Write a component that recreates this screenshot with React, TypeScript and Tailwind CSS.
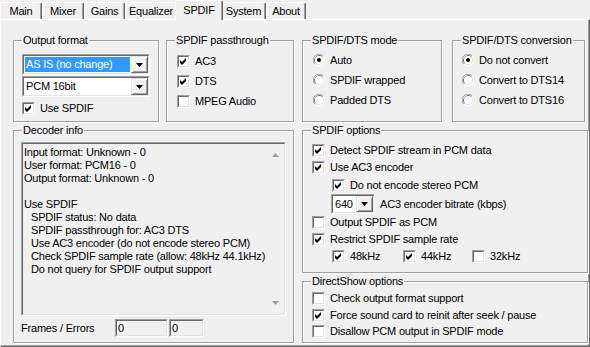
import clsx from 'clsx';
import type { ReactNode } from 'react';

const Check = ({ checked }: { checked?: boolean }) => (
  <span className="inline-block h-[13px] w-[13px] shrink-0 border border-t-[#a0a0a0] border-l-[#a0a0a0] border-b-white border-r-white">
    <span className="flex h-full w-full items-center justify-center border border-t-[#696969] border-l-[#696969] border-b-[#e3e3e3] border-r-[#e3e3e3] bg-white">
      {checked ? (
        <svg width="9" height="9" viewBox="0 0 9 9" className="block">
          <path d="M1 3 L3 5 L7 1 L7 4 L3 8 L1 6 Z" fill="#000" />
        </svg>
      ) : null}
    </span>
  </span>
);

const Radio = ({ checked }: { checked?: boolean }) => (
  <svg width="12" height="12" viewBox="0 0 12 12" className="block shrink-0">
    <path d="M10.24 1.76 A6 6 0 0 0 1.76 10.24" fill="none" stroke="#a0a0a0" strokeWidth="1" />
    <path d="M1.76 10.24 A6 6 0 0 0 10.24 1.76" fill="none" stroke="#fff" strokeWidth="1" />
    <path d="M9.5 2.5 A5 5 0 0 0 2.5 9.5" fill="none" stroke="#696969" strokeWidth="1" />
    <path d="M2.5 9.5 A5 5 0 0 0 9.5 2.5" fill="none" stroke="#e3e3e3" strokeWidth="1" />
    <circle cx="6" cy="6" r="4" fill="#fff" />
    {checked ? <circle cx="6" cy="6" r="2" fill="#000" /> : null}
  </svg>
);

const CheckRow = ({ checked, label, className }: { checked?: boolean; label: string; className?: string }) => (
  <div className={clsx('flex items-center gap-[5px]', className)}>
    <Check checked={checked} />
    <span className="whitespace-nowrap">{label}</span>
  </div>
);

const RadioRow = ({ checked, label }: { checked?: boolean; label: string }) => (
  <div className="flex h-[20px] items-center gap-[5px]">
    <Radio checked={checked} />
    <span className="whitespace-nowrap">{label}</span>
  </div>
);

const Sunken = ({ className, children }: { className?: string; children?: ReactNode }) => (
  <div className={clsx('border border-t-[#a0a0a0] border-l-[#a0a0a0] border-b-white border-r-white', className)}>
    <div className="h-full w-full border border-t-[#696969] border-l-[#696969] border-b-[#e3e3e3] border-r-[#e3e3e3]">
      {children}
    </div>
  </div>
);

const DropButton = () => (
  <div className="flex h-full w-[17px] shrink-0 items-center justify-center border border-t-[#e3e3e3] border-l-[#e3e3e3] border-b-[#696969] border-r-[#696969] bg-[#f0f0f0] shadow-[inset_1px_1px_0_#fff,inset_-1px_-1px_0_#a0a0a0]">
    <svg width="7" height="4" viewBox="0 0 7 4" className="block">
      <path d="M0 0 H7 L3.5 4 Z" fill="#000" />
    </svg>
  </div>
);

const Combo = ({ value, selected, className }: { value: string; selected?: boolean; className?: string }) => (
  <Sunken className={className}>
    <div className="flex h-full bg-white">
      <div className="flex flex-1 items-center p-[1px]">
        <div className={clsx('flex h-full w-full items-center pl-[1px]', selected ? 'bg-[#3399ff] text-white' : '')}>{value}</div>
      </div>
      <DropButton />
    </div>
  </Sunken>
);

const Group = ({ title, className, children }: { title: string; className?: string; children?: ReactNode }) => (
  <div className={clsx('relative border border-[#a0a0a0] shadow-[inset_1px_1px_0_#fff,1px_1px_0_#fff]', className)}>
    <span className="absolute -top-[7px] left-[8px] bg-[#f0f0f0] px-[1px] leading-[13px] whitespace-nowrap">{title}</span>
    {children}
  </div>
);

const tabs = [
  { label: 'Main', w: 'w-[42px]' },
  { label: 'Mixer', w: 'w-[42px]' },
  { label: 'Gains', w: 'w-[41px]' },
  { label: 'Equalizer', w: 'w-[52px]' },
  { label: 'SPDIF', w: 'w-[48px]', selected: true },
  { label: 'System', w: 'w-[45px]' },
  { label: 'About', w: 'w-[40px]' },
];

const decoderLines = [
  { text: 'Input format: Unknown - 0' },
  { text: 'User format: PCM16 - 0' },
  { text: 'Output format: Unknown - 0' },
  { text: '' },
  { text: 'Use SPDIF' },
  { text: 'SPDIF status: No data', indent: true },
  { text: 'SPDIF passthrough for: AC3 DTS', indent: true },
  { text: 'Use AC3 encoder (do not encode stereo PCM)', indent: true },
  { text: 'Check SPDIF sample rate (allow: 48kHz 44.1kHz)', indent: true },
  { text: 'Do not query for SPDIF output support', indent: true },
];

export default function App() {
  return (
    <div className="h-[347px] w-[590px] overflow-hidden bg-[#f0f0f0] font-['Liberation_Sans',Arial,sans-serif] text-[11px] leading-[13px] tracking-[-0.2px] text-black">
      <div className="flex h-[19px] items-end">
        {tabs.map((t) =>
          t.selected ? (
            <div
              key={t.label}
              className={clsx(
                'relative z-10 -mx-[2px] -mb-px flex h-[20px] items-start justify-center rounded-t-[2px] border-l border-t border-r border-l-white border-t-white border-r-[#696969] bg-[#f0f0f0] pt-[3px] shadow-[inset_-1px_0_0_#a0a0a0]',
                t.w,
              )}
            >
              {t.label}
            </div>
          ) : (
            <div
              key={t.label}
              className={clsx(
                'flex h-[17px] items-start justify-center rounded-t-[2px] border-l border-t border-r border-l-white border-t-white border-r-[#696969] pt-[2px] shadow-[inset_-1px_0_0_#a0a0a0]',
                t.w,
              )}
            >
              {t.label}
            </div>
          ),
        )}
      </div>

      <div className="h-[328px] border border-t-white border-l-white border-r-[#696969] border-b-[#696969] pl-[12px] pt-[20px] shadow-[inset_-1px_-1px_0_#a0a0a0]">
        <div className="flex">
          <Group title="Output format" className="h-[82px] w-[146px] pl-[8px] pt-[13px]">
            <Combo value="AS IS (no change)" selected className="h-[21px] w-[128px]" />
            <Combo value="PCM 16bit" className="mt-px h-[21px] w-[128px]" />
            <CheckRow checked label="Use SPDIF" className="mt-[5px]" />
          </Group>

          <Group title="SPDIF passthrough" className="ml-[7px] h-[82px] w-[128px] pl-[10px] pt-[10px]">
            <CheckRow checked label="AC3" className="h-[20px]" />
            <CheckRow checked label="DTS" className="h-[20px]" />
            <CheckRow label="MPEG Audio" className="h-[20px]" />
          </Group>

          <Group title="SPDIF/DTS mode" className="ml-[8px] h-[82px] w-[140px] pl-[10px] pt-[9px]">
            <RadioRow checked label="Auto" />
            <RadioRow label="SPDIF wrapped" />
            <RadioRow label="Padded DTS" />
          </Group>

          <Group title="SPDIF/DTS conversion" className="ml-[10px] h-[82px] w-[133px] pl-[9px] pt-[9px]">
            <RadioRow checked label="Do not convert" />
            <RadioRow label="Convert to DTS14" />
            <RadioRow label="Convert to DTS16" />
          </Group>
        </div>

        <div className="mt-[8px] flex">
          <Group title="Decoder info" className="h-[213px] w-[281px] pl-[7px] pt-[11px]">
            <Sunken className="h-[174px] w-[265px]">
              <div className="flex h-full">
                <div className="flex-1 pl-[1px] pt-[2px]">
                  {decoderLines.map((l, i) => (
                    <div key={i} className={clsx('h-[13px] whitespace-nowrap', l.indent ? 'pl-[7px]' : '')}>
                      {l.text}
                    </div>
                  ))}
                </div>
                <div className="flex w-[17px] flex-col items-center justify-between py-[9px]">
                  <svg width="7" height="4" viewBox="0 0 7 4" className="block">
                    <path d="M3.5 0 L7 4 H0 Z" fill="#a0a0a0" />
                  </svg>
                  <svg width="7" height="4" viewBox="0 0 7 4" className="block">
                    <path d="M0 0 H7 L3.5 4 Z" fill="#a0a0a0" />
                  </svg>
                </div>
              </div>
            </Sunken>
            <div className="mt-[3px] flex h-[18px] items-center">
              <span className="w-[94px]">Frames / Errors</span>
              <Sunken className="h-[18px] w-[53px]">
                <div className="pl-[1px] pt-[1px]">0</div>
              </Sunken>
              <Sunken className="ml-px h-[18px] w-[35px]">
                <div className="pl-[1px] pt-[1px]">0</div>
              </Sunken>
            </div>
          </Group>

          <div className="ml-[8px] flex w-[286px] flex-col gap-[8px]">
            <Group title="SPDIF options" className="h-[143px] pl-[9px] pt-[11px]">
              <CheckRow checked label="Detect SPDIF stream in PCM data" className="h-[17px]" />
              <CheckRow checked label="Use AC3 encoder" className="h-[17px]" />
              <CheckRow checked label="Do not encode stereo PCM" className="h-[18px] pl-[20px]" />
              <div className="flex h-[20px] items-center gap-[5px] pl-[19px]">
                <Combo value="640" className="h-[20px] w-[44px]" />
                <span>AC3 encoder bitrate (kbps)</span>
              </div>
              <CheckRow label="Output SPDIF as PCM" className="h-[17px]" />
              <CheckRow checked label="Restrict SPDIF sample rate" className="h-[17px]" />
              <div className="flex h-[17px] pl-[20px]">
                <CheckRow checked label="48kHz" className="w-[71px]" />
                <CheckRow checked label="44kHz" className="w-[69px]" />
                <CheckRow label="32kHz" />
              </div>
            </Group>

            <Group title="DirectShow options" className="h-[62px] pl-[9px] pt-[8px]">
              <CheckRow label="Check output format support" className="h-[17px]" />
              <CheckRow checked label="Force sound card to reinit after seek / pause" className="h-[16px]" />
              <CheckRow label="Disallow PCM output in SPDIF mode" className="h-[16px]" />
            </Group>
          </div>
        </div>
      </div>
    </div>
  );
}
